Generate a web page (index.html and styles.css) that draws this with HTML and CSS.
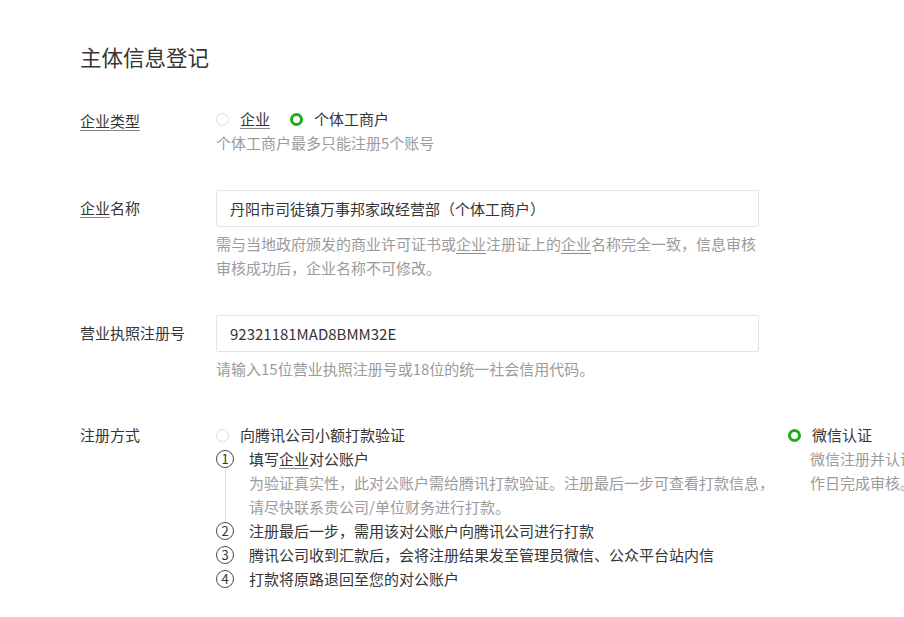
FILE: index.html
```html
<!DOCTYPE html>
<html lang="zh-CN">
<head>
    <meta charset="UTF-8">
    <meta name="viewport" content="width=device-width, initial-scale=1.0">
    <title>主体信息登记</title>
    <link rel="stylesheet" href="styles.css">
</head>
<body>

<div class="page">
    <h1 class="title">主体信息登记</h1>

    <div class="row">
        <div class="label label-radio"><span class="kw">企业类型</span></div>
        <div class="field">
            <div class="radios">
                <label class="radio"><span class="dot"></span><span class="kw">企业</span></label>
                <label class="radio"><span class="dot on"></span>个体工商户</label>
            </div>
            <div class="hint">个体工商户最多只能注册5个账号</div>
        </div>
    </div>

    <div class="row">
        <div class="label label-input"><span class="kw">企业</span>名称</div>
        <div class="field">
            <input class="input" type="text" value="丹阳市司徒镇万事邦家政经营部（个体工商户）">
            <div class="hint hint-wide">需与当地政府颁发的商业许可证书或<span class="kw">企业</span>注册证上的<span class="kw">企业</span>名称完全一致，信息审核审核成功后，企业名称不可修改。</div>
        </div>
    </div>

    <div class="row">
        <div class="label label-input">营业执照注册号</div>
        <div class="field">
            <input class="input" type="text" value="92321181MAD8BMM32E">
            <div class="hint">请输入15位营业执照注册号或18位的统一社会信用代码。</div>
        </div>
    </div>

    <div class="row row-method">
        <div class="label">注册方式</div>
        <div class="field options">
            <div class="option option-bank">
                <label class="radio"><span class="dot"></span>向腾讯公司小额打款验证</label>
                <div class="steps">
                    <div class="step">
                        <div class="mark">
                            <span class="num">1</span>
                            <span class="line"></span>
                        </div>
                        <div class="step-body">
                            <div>填写<span class="kw">企业</span>对公账户</div>
                            <div class="hint">为验证真实性，此对公账户需给腾讯打款验证。注册最后一步可查看打款信息，请尽快联系贵公司/单位财务进行打款。</div>
                        </div>
                    </div>
                    <div class="step">
                        <div class="mark"><span class="num">2</span></div>
                        <div class="step-body">注册最后一步，需用该对公账户向腾讯公司进行打款</div>
                    </div>
                    <div class="step">
                        <div class="mark"><span class="num">3</span></div>
                        <div class="step-body">腾讯公司收到汇款后，会将注册结果发至管理员微信、公众平台站内信</div>
                    </div>
                    <div class="step">
                        <div class="mark"><span class="num">4</span></div>
                        <div class="step-body">打款将原路退回至您的对公账户</div>
                    </div>
                </div>
            </div>
            <div class="option option-wx">
                <label class="radio"><span class="dot on"></span>微信认证</label>
                <div class="hint option-desc">微信注册并认证，需支付300元认证费用，认证审核在1-5个工<br>作日完成审核。</div>
            </div>
        </div>
    </div>
</div>

</body>
</html>
```

FILE: styles.css
```css
html, body {
    overflow: hidden;
}
body {
    margin: 0;
    padding: 0;
    background-color: #fff;
    color: #353535;
    font-family: "Noto Sans CJK SC", "Noto Sans", sans-serif;
    font-size: 15px;
    line-height: 24px;
}
.page {
    padding: 39px 0 0 80px;
}
.title {
    margin: 0 0 32px;
    font-size: 21.5px;
    font-weight: normal;
    line-height: 36px;
}
.row {
    display: flex;
    margin-bottom: 35px;
}
/* margins collapse with the row above */
.row-method {
    margin-top: 42px;
}
.label {
    flex: none;
    width: 136px;
}
.label-radio {
    padding-top: 2px;
}
.label-input {
    padding-top: 6px;
}
.field {
    flex: none;
}
.kw {
    text-decoration: underline;
    text-decoration-color: #8a8a8a;
    text-underline-offset: 3px;
}
.radios {
    display: flex;
    gap: 20px;
}
.radio {
    display: flex;
    align-items: center;
}
.dot {
    box-sizing: border-box;
    width: 13px;
    height: 13px;
    margin-right: 11px;
    border: 1px solid #dcdcdc;
    border-radius: 50%;
}
.dot.on {
    border: 3px solid #1aad19;
}
.hint {
    color: #9b9b9b;
}
.hint-wide {
    width: 548px;
}
.input {
    display: block;
    box-sizing: border-box;
    width: 543px;
    height: 37px;
    margin: 0 0 5px;
    padding: 0 13px;
    border: 1px solid #e4e4e4;
    border-radius: 2px;
    color: #353535;
    font-family: inherit;
    font-size: 15px;
    outline: none;
}
.options {
    display: flex;
}
.option-bank {
    flex: none;
    width: 572px;
}
.option-wx {
    flex: none;
    width: 420px;
}
.option-desc {
    padding-left: 22px;
    white-space: nowrap;
}
.step {
    display: flex;
}
.mark {
    flex: none;
    display: flex;
    flex-direction: column;
    align-items: center;
    width: 18px;
    margin-right: 15px;
}
.num {
    box-sizing: border-box;
    width: 18px;
    height: 18px;
    margin-top: 3px;
    border: 1.2px solid #4a4a4a;
    border-radius: 50%;
    font-size: 13px;
    line-height: 16px;
    text-align: center;
}
.line {
    flex: 1;
    width: 1px;
    margin-bottom: -3px;
    background-color: #d9d9d9;
}
.step-body {
    flex: 1;
}
```
